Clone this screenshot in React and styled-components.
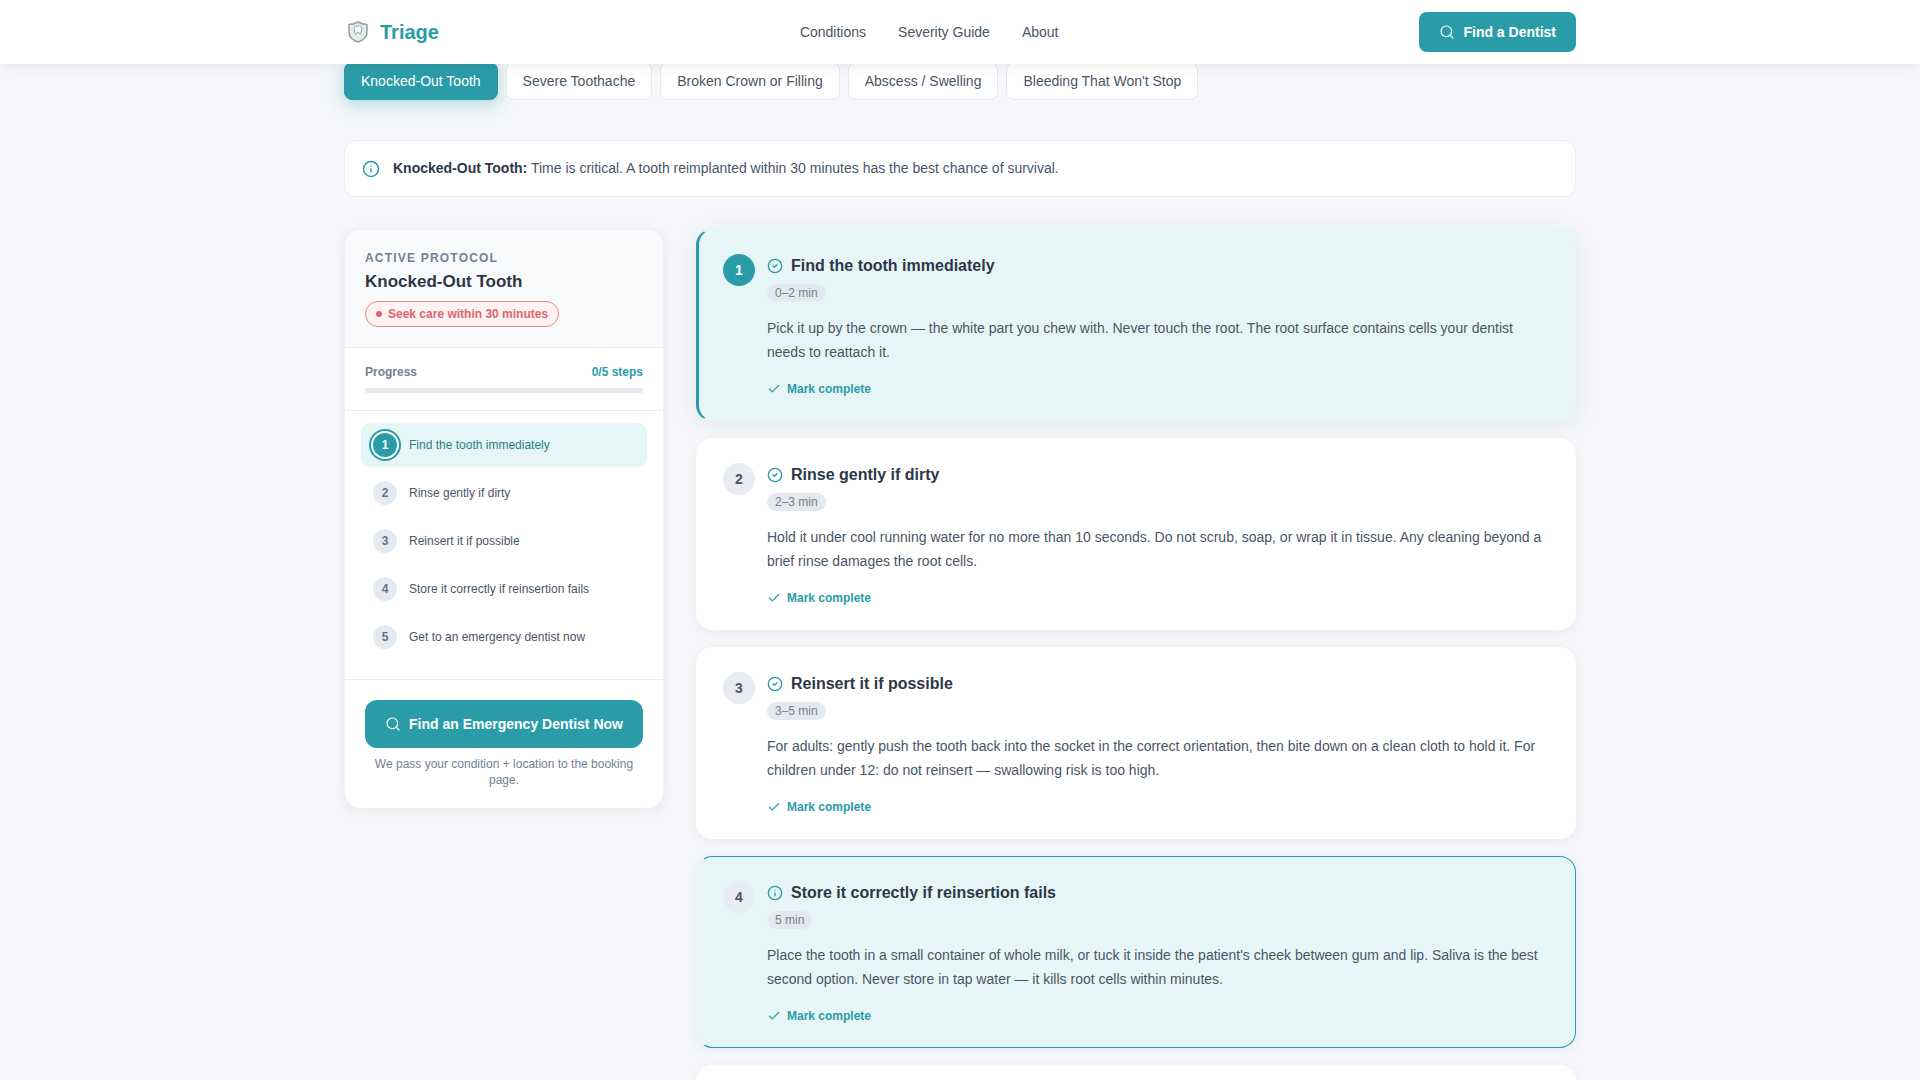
import React from 'react';
import styled, { createGlobalStyle } from 'styled-components';
import { Search, Info, CircleCheck, Check } from 'lucide-react';

const TEAL = '#2a9ca8';

const GlobalStyle = createGlobalStyle`
  * { box-sizing: border-box; }
  html, body { margin: 0; padding: 0; }
  body {
    background: #f5f7fa;
    font-family: "Liberation Sans", Arial, sans-serif;
    color: #2d3748;
  }
`;

const Header = styled.header`
  position: sticky;
  top: 0;
  z-index: 10;
  height: 64px;
  background: #fff;
  box-shadow: 0 2px 12px rgba(0, 0, 0, 0.07);
`;

const HeaderInner = styled.div`
  max-width: 1280px;
  height: 100%;
  margin: 0 auto;
  padding: 0 24px;
  display: flex;
  align-items: center;
  justify-content: space-between;
`;

const Logo = styled.a`
  display: flex;
  align-items: center;
  gap: 8px;
  font-size: 20px;
  font-weight: 700;
  color: ${TEAL};
`;

const Nav = styled.nav`
  display: flex;
  gap: 32px;
`;

const NavLink = styled.a`
  font-size: 14px;
  color: #4a5568;
`;

const HeaderButton = styled.button`
  display: flex;
  align-items: center;
  gap: 8px;
  height: 40px;
  padding: 0 20px;
  border: 0;
  border-radius: 8px;
  background: ${TEAL};
  color: #fff;
  font: 700 14px "Liberation Sans", Arial, sans-serif;
`;

const Page = styled.main`
  max-width: 1280px;
  margin: -2px auto 0;
  padding: 0 24px 48px;
`;

const Tabs = styled.div`
  display: flex;
  gap: 8px;
`;

const Tab = styled.button`
  height: 38px;
  padding: 0 16px;
  border-radius: 8px;
  border: 1px solid ${(p) => (p.$active ? TEAL : '#e5e7eb')};
  background: ${(p) => (p.$active ? TEAL : '#fff')};
  color: ${(p) => (p.$active ? '#fff' : '#4a5568')};
  box-shadow: ${(p) => (p.$active ? '0 4px 16px rgba(42, 156, 168, 0.35)' : 'none')};
  font: 400 14px "Liberation Sans", Arial, sans-serif;
`;

const Notice = styled.div`
  margin-top: 40px;
  display: flex;
  align-items: center;
  gap: 13px;
  padding: 16px 16px 16px 17px;
  background: #fff;
  border: 1px solid #e9edf1;
  border-radius: 12px;
  font-size: 14px;
  line-height: 23.4px;
  color: #4a5568;

  svg {
    margin-top: 1px;
    color: ${TEAL};
    flex-shrink: 0;
  }

  strong {
    color: #2d3748;
  }
`;

const Layout = styled.div`
  margin-top: 32px;
  display: grid;
  grid-template-columns: 320px 1fr;
  gap: 32px;
  align-items: start;
`;

const Sidebar = styled.aside`
  background: #fff;
  border: 1px solid #eef0f3;
  border-radius: 16px;
  box-shadow: 0 2px 12px rgba(0, 0, 0, 0.06);
  overflow: hidden;
`;

const SidebarHead = styled.div`
  padding: 20px;
  background: #f8fafc;
  border-bottom: 1px solid #e9edf1;
`;

const Eyebrow = styled.div`
  font-size: 12px;
  line-height: 16px;
  font-weight: 700;
  letter-spacing: 1.2px;
  color: #718096;
`;

const ProtocolTitle = styled.h2`
  margin: 4px 0 7px;
  font-size: 17px;
  line-height: 24px;
  font-weight: 700;
  color: #2d3748;
`;

const UrgencyPill = styled.span`
  display: inline-flex;
  align-items: center;
  gap: 6px;
  height: 26px;
  padding: 0 10px;
  border: 1px solid #e58a90;
  border-radius: 13px;
  background: #fef2f2;
  color: #dc6570;
  font-size: 12px;
  font-weight: 700;

  &::before {
    content: '';
    width: 6px;
    height: 6px;
    border-radius: 50%;
    background: #e0606b;
  }
`;

const ProgressBlock = styled.div`
  padding: 16px 20px 17px;
  border-bottom: 1px solid #e9edf1;
`;

const ProgressRow = styled.div`
  display: flex;
  justify-content: space-between;
  font-size: 12px;
  line-height: 16px;
  font-weight: 700;
  color: #718096;
`;

const ProgressCount = styled.span`
  color: ${TEAL};
`;

const ProgressTrack = styled.div`
  height: 5px;
  margin-top: 8px;
  border-radius: 3px;
  background: #e5e9f0;
`;

const StepList = styled.div`
  display: flex;
  flex-direction: column;
  gap: 4px;
  padding: 12px 16px 20px;
  border-bottom: 1px solid #e9edf1;
`;

const StepRow = styled.div`
  display: flex;
  align-items: center;
  gap: 12px;
  height: 44px;
  padding: 0 12px;
  border-radius: 10px;
  background: ${(p) => (p.$active ? '#e6f6f6' : 'transparent')};
  color: ${(p) => (p.$active ? '#2a7f8a' : '#4a5568')};
  font-size: 12px;
`;

const StepDot = styled.span`
  width: 24px;
  height: 24px;
  border-radius: 50%;
  display: flex;
  align-items: center;
  justify-content: center;
  flex-shrink: 0;
  font-size: 12px;
  font-weight: 700;
  background: ${(p) => (p.$active ? TEAL : '#e5e9f0')};
  color: ${(p) => (p.$active ? '#fff' : '#64748b')};
  box-shadow: ${(p) => (p.$active ? `0 0 0 2px #fff, 0 0 0 4px ${TEAL}` : 'none')};
`;

const SidebarFoot = styled.div`
  padding: 20px;
`;

const EmergencyButton = styled.button`
  width: 100%;
  height: 48px;
  display: flex;
  align-items: center;
  justify-content: center;
  gap: 8px;
  border: 0;
  border-radius: 12px;
  background: ${TEAL};
  color: #fff;
  font: 700 14px "Liberation Sans", Arial, sans-serif;
`;

const FootNote = styled.p`
  margin: 8px 0 0;
  text-align: center;
  font-size: 12px;
  line-height: 16px;
  color: #718096;
`;

const Cards = styled.div`
  display: flex;
  flex-direction: column;
  gap: 17.4px;
`;

const StepCard = styled.article`
  display: flex;
  gap: 12px;
  padding: 24px 24px 23px;
  border-radius: 16px;
  border: 1px solid ${(p) => (p.$tone === 'warn' ? TEAL : 'transparent')};
  border-left: 3px solid ${(p) => (p.$tone === 'active' ? TEAL : 'transparent')};
  background: ${(p) => (p.$tone ? '#e6f6f6' : '#fff')};
  box-shadow: ${(p) =>
    p.$tone === 'active' ? '0 4px 24px rgba(0, 0, 0, 0.08)' : '0 2px 10px rgba(0, 0, 0, 0.06)'};
`;

const CardNumber = styled.div`
  width: 32px;
  height: 32px;
  border-radius: 50%;
  display: flex;
  align-items: center;
  justify-content: center;
  flex-shrink: 0;
  font-size: 14px;
  font-weight: 700;
  background: ${(p) => (p.$active ? TEAL : '#e9ecf2')};
  color: ${(p) => (p.$active ? '#fff' : '#4a5568')};
`;

const CardBody = styled.div`
  flex: 1;
  min-width: 0;
`;

const CardTitle = styled.h3`
  display: flex;
  align-items: center;
  gap: 8px;
  margin: 0;
  font-size: 16px;
  line-height: 24px;
  font-weight: 700;
  color: #2d3748;

  svg {
    color: ${TEAL};
    flex-shrink: 0;
  }
`;

const TimeChip = styled.span`
  display: inline-block;
  margin-top: 6px;
  padding: 0 8px;
  height: 18px;
  border-radius: 9px;
  background: #e5e9ef;
  color: #718096;
  font-size: 12px;
  line-height: 18px;
  vertical-align: top;
`;

const CardText = styled.p`
  margin: 14.7px 0 0;
  font-size: 14px;
  line-height: 23.8px;
  color: #4a5568;
`;

const MarkComplete = styled.button`
  display: flex;
  align-items: center;
  gap: 6px;
  margin-top: 16.3px;
  padding: 0;
  height: 16px;
  border: 0;
  background: none;
  color: ${TEAL};
  font: 700 12px "Liberation Sans", Arial, sans-serif;
`;

const TABS = ['Knocked-Out Tooth', 'Severe Toothache', 'Broken Crown or Filling', 'Abscess / Swelling', "Bleeding That Won't Stop"];

const STEPS = [
  {
    title: 'Find the tooth immediately',
    time: '0–2 min',
    tone: 'active',
    text: 'Pick it up by the crown — the white part you chew with. Never touch the root. The root surface contains cells your dentist needs to reattach it.',
  },
  {
    title: 'Rinse gently if dirty',
    time: '2–3 min',
    text: 'Hold it under cool running water for no more than 10 seconds. Do not scrub, soap, or wrap it in tissue. Any cleaning beyond a brief rinse damages the root cells.',
  },
  {
    title: 'Reinsert it if possible',
    time: '3–5 min',
    text: 'For adults: gently push the tooth back into the socket in the correct orientation, then bite down on a clean cloth to hold it. For children under 12: do not reinsert — swallowing risk is too high.',
  },
  {
    title: 'Store it correctly if reinsertion fails',
    time: '5 min',
    tone: 'warn',
    text: "Place the tooth in a small container of whole milk, or tuck it inside the patient's cheek between gum and lip. Saliva is the best second option. Never store in tap water — it kills root cells within minutes.",
  },
  { title: 'Get to an emergency dentist now' },
];

const ToothShield = () => (
  <svg width="28" height="28" viewBox="0 0 28 28" fill="none">
    <path
      d="M5 6.500c3 0 6-.8 9-2.500 3 1.700 6 2.500 9 2.500V14c0 5.200-3.600 8.200-9 10-5.400-1.800-9-4.800-9-10V6.500z"
      fill="#e6eaeb"
      stroke="#98a3a5"
      strokeWidth="1.6"
      strokeLinejoin="round"
    />
    <path
      d="M14 8.500c-1-.8-3.600-.8-3.800 2 0 2 .8 2.800 1 5 .1 1.200 1.200 1.200 1.500 0 .2-.8.4-1.200 1.300-1.200s1.100.4 1.300 1.200c.3 1.200 1.400 1.200 1.500 0 .2-2.200 1-3 1-5-.2-2.800-2.800-2.800-3.800-2z"
      fill="#f6f8f8"
      stroke="#7fa6aa"
      strokeWidth="1"
    />
  </svg>
);

const App = () => (
  <>
    <GlobalStyle />
    <Header>
      <HeaderInner>
        <Logo>
          <ToothShield />
          Triage
        </Logo>
        <Nav>
          <NavLink>Conditions</NavLink>
          <NavLink>Severity Guide</NavLink>
          <NavLink>About</NavLink>
        </Nav>
        <HeaderButton>
          <Search size={16} strokeWidth={1.75} />
          Find a Dentist
        </HeaderButton>
      </HeaderInner>
    </Header>

    <Page>
      <Tabs>
        {TABS.map((tab, i) => (
          <Tab key={tab} $active={i === 0}>{tab}</Tab>
        ))}
      </Tabs>

      <Notice>
        <Info size={18} />
        <span>
          <strong>Knocked-Out Tooth:</strong> Time is critical. A tooth reimplanted within 30 minutes has the best chance of survival.
        </span>
      </Notice>

      <Layout>
        <Sidebar>
          <SidebarHead>
            <Eyebrow>ACTIVE PROTOCOL</Eyebrow>
            <ProtocolTitle>Knocked-Out Tooth</ProtocolTitle>
            <UrgencyPill>Seek care within 30 minutes</UrgencyPill>
          </SidebarHead>
          <ProgressBlock>
            <ProgressRow>
              <span>Progress</span>
              <ProgressCount>0/5 steps</ProgressCount>
            </ProgressRow>
            <ProgressTrack />
          </ProgressBlock>
          <StepList>
            {STEPS.map((step, i) => (
              <StepRow key={step.title} $active={i === 0}>
                <StepDot $active={i === 0}>{i + 1}</StepDot>
                {step.title}
              </StepRow>
            ))}
          </StepList>
          <SidebarFoot>
            <EmergencyButton>
              <Search size={16} strokeWidth={1.75} />
              Find an Emergency Dentist Now
            </EmergencyButton>
            <FootNote>We pass your condition + location to the booking page.</FootNote>
          </SidebarFoot>
        </Sidebar>

        <Cards>
          {STEPS.map((step, i) => (
            <StepCard key={step.title} $tone={step.tone}>
              <CardNumber $active={step.tone === 'active'}>{i + 1}</CardNumber>
              <CardBody>
                <CardTitle>
                  {step.tone === 'warn' ? <Info size={16} /> : <CircleCheck size={16} />}
                  {step.title}
                </CardTitle>
                {step.time && <TimeChip>{step.time}</TimeChip>}
                {step.text && <CardText>{step.text}</CardText>}
                <MarkComplete>
                  <Check size={14} />
                  Mark complete
                </MarkComplete>
              </CardBody>
            </StepCard>
          ))}
        </Cards>
      </Layout>
    </Page>
  </>
);

export default App;
